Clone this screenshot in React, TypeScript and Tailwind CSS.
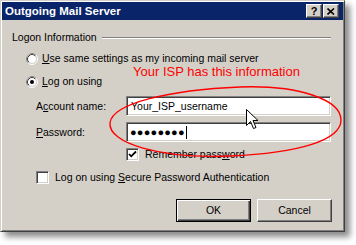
import React from "react";

const sunken =
  "border border-t-[#808080] border-l-[#808080] border-b-white border-r-white shadow-[inset_1px_1px_0_#404040,inset_-1px_-1px_0_#d4d0c8]";
const raised =
  "border border-t-white border-l-white border-b-[#404040] border-r-[#404040] shadow-[inset_-1px_-1px_0_#808080]";

const Radio = ({ checked }: { checked?: boolean }) => (
  <svg width="12" height="12" viewBox="0 0 12 12" className="shrink-0">
    <circle cx="6" cy="6" r="5.5" fill="none" stroke="#ffffff" />
    <path d="M2.11 9.89 A5.5 5.5 0 0 1 9.89 2.11" fill="none" stroke="#808080" />
    <circle cx="6" cy="6" r="4.5" fill="#ffffff" stroke="#d4d0c8" />
    <path d="M2.82 9.18 A4.5 4.5 0 0 1 9.18 2.82" fill="none" stroke="#404040" />
    {checked && <circle cx="6" cy="6" r="2" fill="#000000" />}
  </svg>
);

const Checkbox = ({ checked }: { checked?: boolean }) => (
  <div className={`w-[13px] h-[13px] bg-white shrink-0 flex items-center justify-center ${sunken}`}>
    {checked && (
      <svg width="9" height="9" viewBox="0 0 9 9">
        <path d="M1 4 L3.2 6.3 L8 1.5" fill="none" stroke="#000" strokeWidth="1.8" />
      </svg>
    )}
  </div>
);

const TitleButton = ({ children }: { children: React.ReactNode }) => (
  <div
    className={`w-[16px] h-[14px] bg-[#d4d0c8] flex items-center justify-center ${raised}`}
  >
    {children}
  </div>
);

export default function App() {
  return (
    <div className="relative w-[356px] h-[245px] bg-white overflow-hidden font-['Liberation_Sans',Arial,sans-serif] text-[10.5px] leading-[13px] text-black">
      {/* dialog window */}
      <div
        className={`w-[345px] h-[232px] bg-[#d4d0c8] p-[1px] border border-t-[#d4d0c8] border-l-[#d4d0c8] border-b-[#404040] border-r-[#404040] shadow-[inset_1px_1px_0_#ffffff,inset_-1px_-1px_0_#808080,5px_5px_6px_rgba(0,0,0,0.45)]`}
      >
        {/* title bar */}
        <div className="h-[18px] bg-[#0a246a] flex items-center pl-[3px] pr-[4px]">
          <span className="text-white font-bold text-[11.5px] flex-1">Outgoing Mail Server</span>
          <div className="flex gap-[1px]">
            <TitleButton>
              <span className="font-bold text-[11px] leading-[11px]">?</span>
            </TitleButton>
            <TitleButton>
              <svg width="8" height="7" viewBox="0 0 8 7">
                <path d="M0.5 0.5 L7 6.5 M7 0.5 L0.5 6.5" stroke="#000" strokeWidth="1.6" />
              </svg>
            </TitleButton>
          </div>
        </div>

        {/* group header */}
        <div className="mt-[11px] pl-[10px] flex items-center">
          <span>Logon Information</span>
          <div className="flex-1 ml-[5px] mr-[12px] h-[2px] border-t border-t-[#808080] border-b border-b-white" />
        </div>

        <div className="mt-[8px] pl-[24px] flex items-center gap-[4px] h-[13px]">
          <Radio />
          <span>
            <u>U</u>se same settings as my incoming mail server
          </span>
        </div>

        <div className="mt-[10px] pl-[24px] flex items-center gap-[4px] h-[13px]">
          <Radio checked />
          <span>
            <u>L</u>og on using
          </span>
        </div>

        <div className="mt-[8px] pl-[34px] flex items-center h-[20px]">
          <span className="w-[90px]">
            A<u>c</u>count name:
          </span>
          <div className={`w-[205px] h-[20px] bg-white flex items-center pl-[4px] ${sunken}`}>
            Your_ISP_username
          </div>
        </div>

        <div className="mt-[6px] pl-[34px] flex items-center h-[20px]">
          <span className="w-[90px]">
            <u>P</u>assword:
          </span>
          <div className={`w-[205px] h-[20px] bg-white flex items-center pl-[3px] ${sunken}`}>
            <span className="text-[11px] tracking-[0.2px]">●●●●●●●●</span>
            <span className="w-[1px] h-[13px] bg-black ml-[1px]" />
          </div>
        </div>

        <div className="mt-[6px] pl-[124px] flex items-center gap-[6px] h-[13px]">
          <Checkbox checked />
          <span>
            Remember pass<u>w</u>ord
          </span>
        </div>

        <div className="mt-[10px] pl-[34px] flex items-center gap-[6px] h-[13px]">
          <Checkbox />
          <span>
            Log on using <u>S</u>ecure Password Authentication
          </span>
        </div>

        <div className="mt-[15px] pr-[11px] flex justify-end gap-[6px]">
          <button className="w-[75px] h-[23px] bg-[#d4d0c8] border border-black shadow-[inset_1px_1px_0_#ffffff,inset_-1px_-1px_0_#404040,inset_-2px_-2px_0_#808080] text-[10.5px]">
            OK
          </button>
          <button className={`w-[75px] h-[23px] bg-[#d4d0c8] text-[10.5px] ${raised}`}>
            Cancel
          </button>
        </div>
      </div>

      {/* annotation */}
      <span className="absolute left-[133px] top-[64px] text-[13px] leading-[15px] text-[#ff0000] whitespace-nowrap">
        Your ISP has this information
      </span>
      <svg className="absolute left-0 top-0 pointer-events-none" width="356" height="245" viewBox="0 0 356 245">
        <path
          d="M110 123 C112 103 170 90 240 87 C300 85 341 100 341 120 C341 140 300 153 230 156 C160 159 108 143 110 123 Z"
          fill="none"
          stroke="#ff0000"
          strokeWidth="1.4"
        />
        <path
          d="M246.5 109.5 L246.5 125.5 L250.5 121.5 L253.5 128.5 L256 127.5 L253 120.5 L258 120.5 Z"
          fill="#ffffff"
          stroke="#000000"
          strokeWidth="1"
          strokeLinejoin="miter"
        />
      </svg>
    </div>
  );
}
